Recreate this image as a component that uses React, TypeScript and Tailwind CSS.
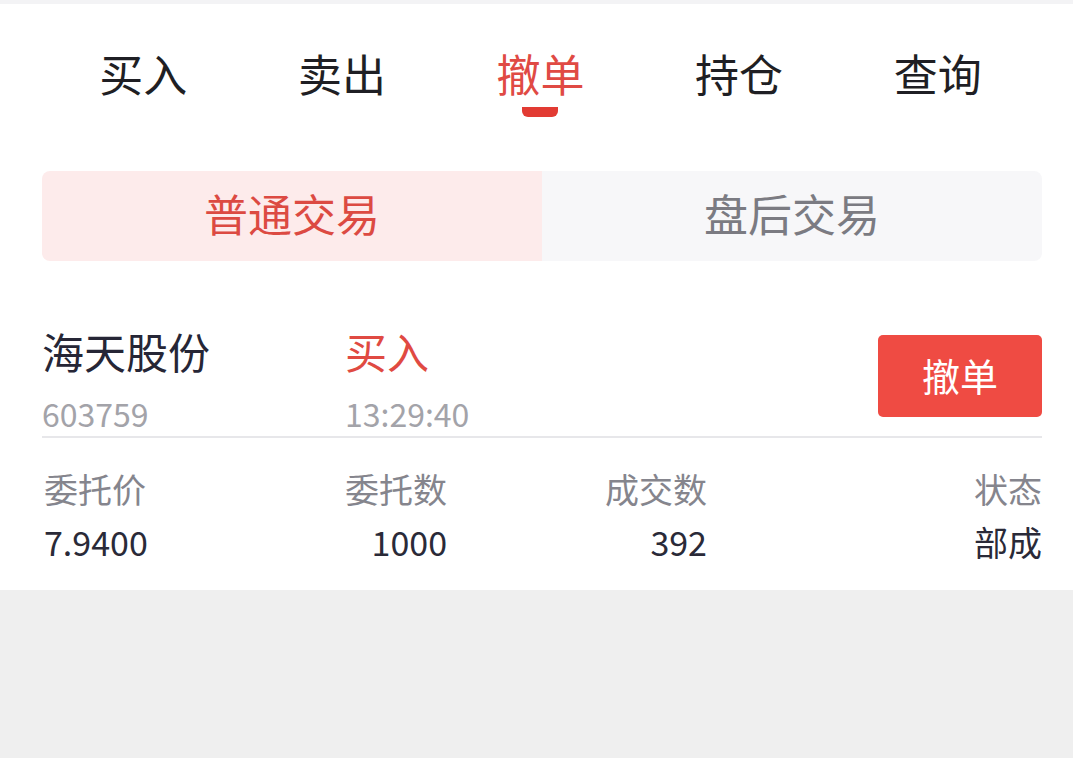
const tabs = ['买入', '卖出', '撤单', '持仓', '查询'];

const font = { fontFamily: '"Noto Sans CJK SC", "Noto Sans", sans-serif' };

export default function App() {
  const active = 2;

  return (
    <div className="w-full h-[758px] bg-[#efefef] overflow-hidden" style={font}>
      <div className="h-[4px] bg-[#f3f3f5]" />
      <div className="bg-white pb-[26px]">
        {/* Top tabs */}
        <div className="pt-[44px] pl-[44px] grid grid-cols-5 w-[1037px]">
          {tabs.map((t, i) => (
            <div key={t} className="flex flex-col items-center">
              <span
                className={`text-[44px] leading-[50px] ${
                  i === active ? 'text-[#e04a44]' : 'text-[#1f1f24]'
                }`}
              >
                {t}
              </span>
              {i === active ? (
                <div className="mt-[9px] w-[36px] h-[10px] bg-[#e23b33] rounded-b-[6px]" />
              ) : (
                <div className="mt-[9px] h-[10px]" />
              )}
            </div>
          ))}
        </div>

        {/* Segment */}
        <div className="mt-[54px] ml-[42px] w-[1000px] h-[90px] flex rounded-[8px] overflow-hidden">
          <div className="flex-1 bg-[#fdebeb] flex items-center justify-center pb-[6px] text-[44px] text-[#dc4a42]">
            普通交易
          </div>
          <div className="flex-1 bg-[#f7f7f9] flex items-center justify-center pb-[6px] text-[44px] text-[#7b7b82]">
            盘后交易
          </div>
        </div>

        {/* Order row */}
        <div className="mt-[65px] ml-[42px] w-[1000px] flex items-start">
          <div className="w-[303px] flex flex-col">
            <span className="text-[42px] leading-[50px] text-[#262636]">海天股份</span>
            <span className="mt-[17px] text-[32px] leading-[40px] text-[#a3a3a9]">603759</span>
          </div>
          <div className="flex-1 flex flex-col">
            <span className="text-[42px] leading-[50px] text-[#e04a42]">买入</span>
            <span className="mt-[17px] text-[32px] leading-[40px] text-[#a3a3a9]">13:29:40</span>
          </div>
          <button className="mt-[9px] w-[164px] h-[82px] bg-[#ef4b43] rounded-[5px] text-white text-[38px] pb-[4px] flex items-center justify-center">
            撤单
          </button>
        </div>
        <div className="mt-[3px] ml-[42px] w-[1000px] h-[2px] bg-[#e7e7ea]" />

        {/* Details */}
        <div className="mt-[29px] ml-[42px] w-[1000px] flex flex-col gap-[9px]">
          <div className="flex text-[34px] leading-[44px] text-[#85858d]">
            <span className="w-[150px] pl-[2px]">委托价</span>
            <span className="w-[255px] text-right">委托数</span>
            <span className="w-[260px] text-right">成交数</span>
            <span className="w-[335px] text-right">状态</span>
          </div>
          <div className="flex text-[34px] leading-[44px] text-[#2a2a38]">
            <span className="w-[150px] pl-[2px]">7.9400</span>
            <span className="w-[255px] text-right">1000</span>
            <span className="w-[260px] text-right">392</span>
            <span className="w-[335px] text-right">部成</span>
          </div>
        </div>
      </div>
    </div>
  );
}
